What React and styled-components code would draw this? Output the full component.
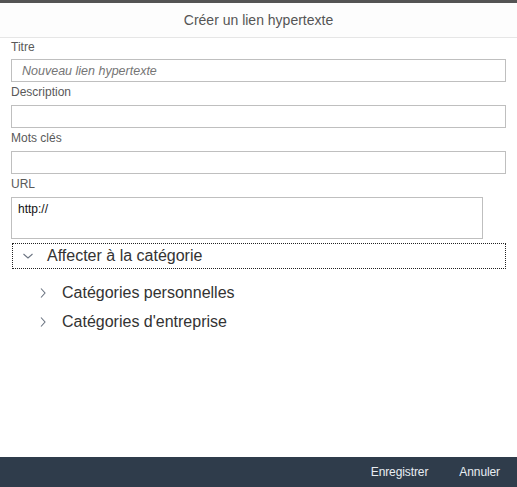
import React from "react";
import styled, { createGlobalStyle } from "styled-components";

const Global = createGlobalStyle`
  html, body { margin: 0; padding: 0; background: #ffffff; }
  body { font-family: "Liberation Sans", Arial, sans-serif; }
  * { box-sizing: border-box; }
`;

const Page = styled.div`
  width: 517px;
  height: 487px;
  display: flex;
  flex-direction: column;
  background: #ffffff;
  overflow: hidden;
`;

const TopStrip = styled.div`
  height: 3px;
  background: #545454;
  flex: none;
`;

const Header = styled.div`
  height: 35px;
  flex: none;
  display: flex;
  align-items: center;
  justify-content: center;
  border-bottom: 1px solid #e6e6e6;
  background: #fdfdfd;
  color: #555555;
  font-size: 14px;
`;

const Form = styled.div`
  display: flex;
  flex-direction: column;
  padding: 0 11px;
`;

const Label = styled.div`
  height: ${(p) => (p.$first ? 21 : 23)}px;
  line-height: ${(p) => (p.$first ? 16 : 19)}px;
  padding-top: 1px;
  font-size: 12px;
  color: #595959;
`;

const Input = styled.div`
  height: 23px;
  width: 495px;
  border: 1px solid #bfbfbf;
  background: #ffffff;
  padding-left: 10px;
  display: flex;
  align-items: center;
  font-size: 12.5px;
  color: #757575;
  font-style: italic;
`;

const TextArea = styled.div`
  height: 42px;
  width: 472px;
  border: 1px solid #bfbfbf;
  background: #ffffff;
  padding: 4px 6px;
  font-size: 12px;
  color: #111111;
`;

const Toggle = styled.div`
  margin: 4px 0 0 1px;
  height: 26px;
  width: 494px;
  border: 1px dotted #222222;
  display: flex;
  align-items: center;
  padding-left: 10px;
  gap: 14px;
  font-size: 16px;
  color: #333333;
`;

const Items = styled.div`
  display: flex;
  flex-direction: column;
  padding: 9px 0 0 38px;
`;

const Item = styled.div`
  height: 29px;
  display: flex;
  align-items: center;
  gap: 14px;
  font-size: 16px;
  color: #333333;
`;

const Spacer = styled.div`
  flex: 1;
`;

const Footer = styled.div`
  height: 30px;
  flex: none;
  background: #2f3c4b;
  display: flex;
  align-items: center;
  justify-content: flex-end;
  gap: 31px;
  padding-right: 17px;
`;

const FooterButton = styled.div`
  color: #e8edf2;
  font-size: 12px;
  letter-spacing: -0.1px;
`;

const Chevron = ({ dir }) => (
  <svg width="10" height="10" viewBox="0 0 10 10" fill="none" stroke="#6a7380" strokeWidth="1.1">
    {dir === "down" ? <path d="M0.5 3 L5 7 L9.5 3" /> : <path d="M3 0.5 L7 5 L3 9.5" />}
  </svg>
);

export default function App() {
  return (
    <Page>
      <Global />
      <TopStrip />
      <Header>Créer un lien hypertexte</Header>
      <Form>
        <Label $first>Titre</Label>
        <Input>Nouveau lien hypertexte</Input>
        <Label>Description</Label>
        <Input />
        <Label>Mots clés</Label>
        <Input />
        <Label>URL</Label>
        <TextArea>http://</TextArea>
        <Toggle>
          <Chevron dir="down" />
          <span>Affecter à la catégorie</span>
        </Toggle>
      </Form>
      <Items>
        <Item>
          <Chevron dir="right" />
          <span>Catégories personnelles</span>
        </Item>
        <Item>
          <Chevron dir="right" />
          <span>Catégories d'entreprise</span>
        </Item>
      </Items>
      <Spacer />
      <Footer>
        <FooterButton>Enregistrer</FooterButton>
        <FooterButton>Annuler</FooterButton>
      </Footer>
    </Page>
  );
}
